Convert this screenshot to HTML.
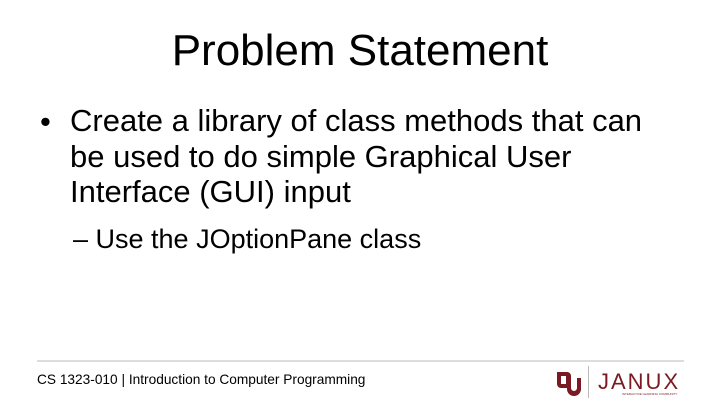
<!DOCTYPE html>
<html><head><style>
body{margin:0;width:720px;height:405px;background:#fff;position:relative;overflow:hidden;font-family:"Liberation Sans",sans-serif;color:#000}
.a{position:absolute;white-space:nowrap}
</style></head><body>
<div class="a" style="left:0;width:720px;text-align:center;top:26px;font-size:44px;">Problem Statement</div>
<div class="a" style="left:40px;top:104px;font-size:31px;">•</div>
<div class="a" style="left:70px;top:103px;font-size:31px;line-height:35.5px;">Create a library of class methods that can<br>be used to do simple Graphical User<br>Interface (GUI) input</div>
<div class="a" style="left:73px;top:224px;font-size:27px;">– Use the JOptionPane class</div>
<div class="a" style="left:37px;top:360px;width:647px;height:2px;background:#ddd"></div>
<div class="a" style="left:37px;top:372px;font-size:13.7px;">CS 1323-010 | Introduction to Computer Programming</div>
<svg class="a" style="left:555px;top:368px" width="30" height="28" viewBox="0 0 30 28">
<path d="M2 4h10a4 4 0 0 1 4 4v8a4 4 0 0 1-4 4H6a4 4 0 0 1-4-4z M6 8v8h5V8z" fill="#7a1a22" fill-rule="evenodd"/>
<path d="M12 10h4v10a3 3 0 0 0 6 0V10h4v11a6 6 0 0 1-14 0z" fill="#7a1a22"/>
</svg>
<div class="a" style="left:588px;top:366px;width:1px;height:32px;background:#bbb"></div>
<div class="a" style="left:598px;top:369px;font-size:22px;color:#7a1a22;letter-spacing:2px;">JANUX</div>
<div class="a" style="left:622px;top:392px;font-size:3px;color:#7a1a22;">INTERACTIVE LEARNING COMMUNITY</div>
</body></html>
